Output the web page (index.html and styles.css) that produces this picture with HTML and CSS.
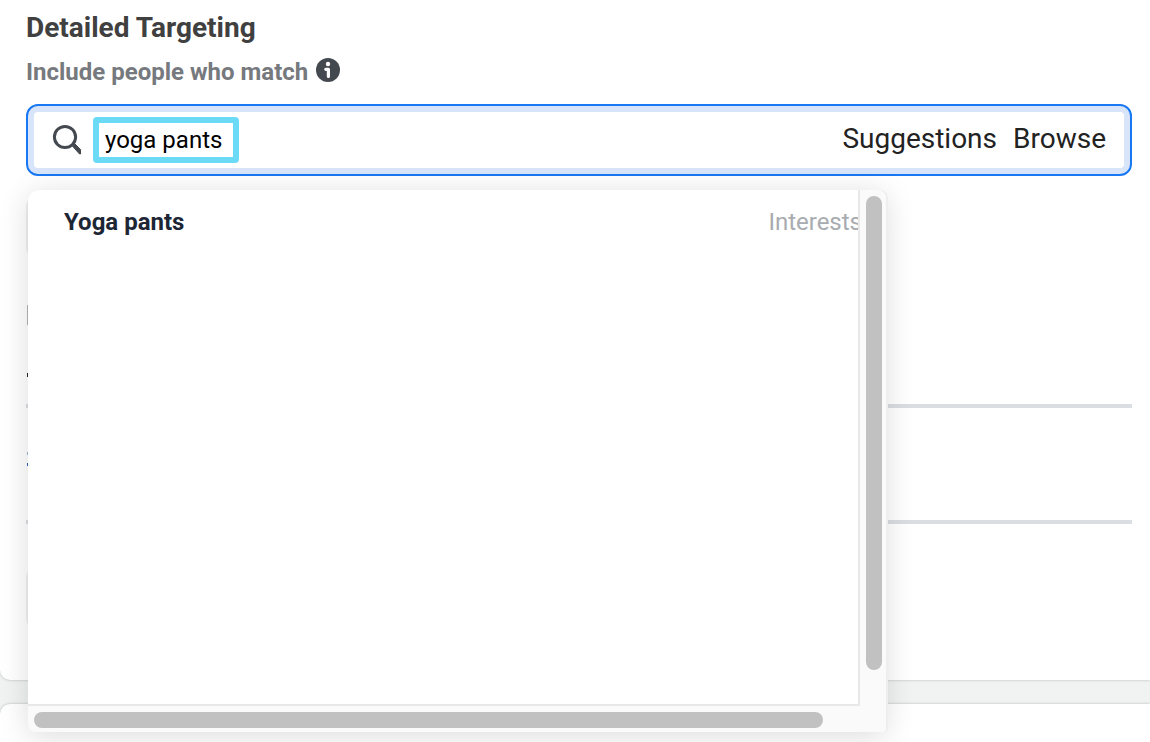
FILE: index.html
```html
<!DOCTYPE html>
<html lang="en">

<head>
    <meta charset="UTF-8">
    <meta name="viewport" content="width=device-width, initial-scale=1.0">
    <title>Detailed Targeting</title>
    <link rel="stylesheet" href="styles.css">
</head>

<body>
    <main class="card">
        <h1>Detailed Targeting</h1>
        <div class="sub">
            <label for="search">Include people who match</label>
            <svg class="info" viewBox="0 0 24 24" aria-hidden="true">
                <circle cx="12" cy="12" r="12" fill="#444950" />
                <circle cx="12" cy="6" r="2.2" fill="#fff" />
                <path d="M9.8 11.3h2.6v7.2" fill="none" stroke="#fff" stroke-width="3.2" stroke-linecap="round" stroke-linejoin="round" />
            </svg>
        </div>
        <div class="targeting">
            <div class="searchBox">
                <svg class="glass" viewBox="0 0 30 32" aria-hidden="true">
                    <circle cx="13" cy="13" r="10.6" />
                    <path d="M19.5 21l2.5-2 6.5 6.5v4.5h-1z" class="handle" />
                </svg>
                <input id="search" type="text" value="yoga pants">
                <div class="links">
                    <button type="button">Suggestions</button>
                    <button type="button">Browse</button>
                </div>
            </div>
            <div class="popup">
                <div class="list">
                    <div class="item">
                        <span class="name">Yoga pants</span>
                        <span class="type">Interests</span>
                    </div>
                </div>
                <div class="bar vertical"><div class="thumb"></div></div>
                <div class="bar horizontal"><div class="thumb"></div></div>
            </div>
        </div>
        <div class="box"></div>
        <div class="mark"></div>
        <div class="mark dark"></div>
        <hr>
        <div class="mark blue"></div>
        <hr>
        <div class="box last"></div>
    </main>
    <section class="card next"></section>
</body>

</html>
```

FILE: styles.css
```css
* {
    box-sizing: border-box;
}

body {
    margin: 0;
    height: 100vh;
    overflow: hidden;
    display: flex;
    flex-direction: column;
    gap: 24px;
    background-color: #f1f3f3;
    font-family: Roboto, "Liberation Sans", sans-serif;
}

.card {
    flex-shrink: 0;
    padding: 8px 18px 50px 26px;
    background-color: #fff;
    border-radius: 0 0 0 10px;
    box-shadow: 0 0 3px rgba(0, 0, 0, 0.25);
}

.next {
    flex: 1 0 auto;
    padding: 0;
    border-radius: 10px 0 0 0;
}

h1 {
    margin: 0;
    font-size: 28px;
    line-height: 40px;
    font-weight: 700;
    color: #404040;
}

.sub {
    display: flex;
    align-items: center;
    gap: 8px;
    height: 48px;
    margin-bottom: 8px;
    font-size: 24px;
    font-weight: 700;
    color: #76797d;
}

.info {
    width: 24px;
    height: 24px;
    margin-bottom: 4px;
}

.targeting {
    position: relative;
}

.searchBox {
    display: flex;
    align-items: center;
    height: 72px;
    padding: 0 18px;
    border: 2px solid #1877f2;
    border-radius: 12px;
    background-color: #fff;
    box-shadow: inset 0 0 0 6px #d8e4fa;
}

.glass {
    width: 30px;
    height: 32px;
    margin: 0 11px 0 6px;
    fill: none;
    stroke: #444950;
    stroke-width: 3;
}

.handle {
    fill: #444950;
    stroke-width: 1;
}

#search {
    width: 146px;
    height: 46px;
    padding: 0 6px;
    border: 6px solid #6bdaf6;
    border-radius: 4px;
    outline: none;
    font: 24px Roboto, "Liberation Sans", sans-serif;
    color: #000;
}

.links {
    display: flex;
    gap: 16px;
    margin: 0 6px 4px auto;
}

.links button {
    padding: 0;
    border: 0;
    background: none;
    font: 28px Roboto, "Liberation Sans", sans-serif;
    color: #222;
}

.popup {
    position: absolute;
    top: 86px;
    left: 2px;
    width: 858px;
    height: 542px;
    display: grid;
    grid-template-columns: 1fr 26px;
    grid-template-rows: 1fr 26px;
    overflow: hidden;
    border-radius: 12px 8px 4px 8px;
    background-color: #fafafa;
    box-shadow: 2px 0 0 #eee, 0 4px 30px rgba(0, 0, 0, 0.14);
}

.list {
    overflow: hidden;
    border-right: 2px solid #e8e8e8;
    border-bottom: 2px solid #e8e8e8;
    background-color: #fff;
}

.item {
    display: flex;
    justify-content: space-between;
    margin-right: -4px;
    padding-left: 36px;
    font-size: 24px;
    line-height: 64px;
}

.name {
    font-weight: 700;
    color: #1d2635;
}

.type {
    color: #a8abaf;
}

.vertical {
    padding: 6px 4px 0 6px;
}

.horizontal {
    padding: 6px 0 4px 6px;
}

.thumb {
    border-radius: 8px;
    background-color: #c1c1c1;
}

.vertical .thumb {
    height: 474px;
}

.horizontal .thumb {
    width: 789px;
    height: 16px;
}

/* controls mostly covered by the popup */
.box {
    width: 200px;
    height: 64px;
    margin: 19px 0 46px;
    border-radius: 12px;
    background-color: #f0f0f0;
}

.last {
    margin: 42px 0 0;
}

/* left edges of the rows under the popup */
.mark {
    width: 1px;
    height: 20px;
    margin-left: 1px;
    background-color: #b5b5b5;
}

.dark {
    height: 4px;
    margin-top: 48px;
    background-color: #222;
}

.blue {
    height: 14px;
    margin-top: 44px;
    border-top: 3px solid #9db8dc;
    border-bottom: 3px solid #2d62b5;
    background: none;
}

hr {
    height: 4px;
    margin: 27px 0 0;
    border: 0;
    background-color: #dadde1;
}

.blue + hr {
    margin-top: 54px;
}
```
